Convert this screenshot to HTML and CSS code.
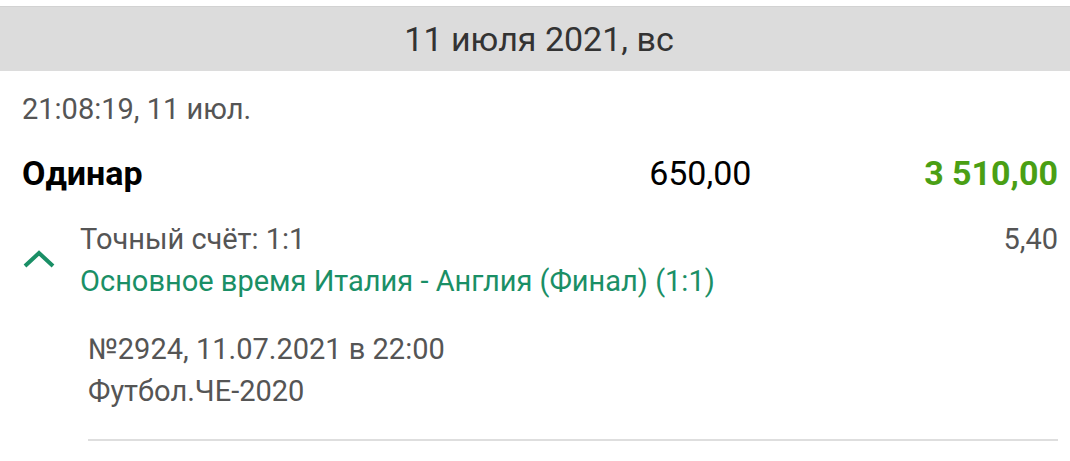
FILE: index.html
```html
<!DOCTYPE html>
<html lang="ru">
<head>
<meta charset="utf-8">
<link rel="stylesheet" href="styles.css">
</head>
<body>
<div class="day-head">11 июля 2021, вс</div>
<div class="bet">
  <div class="bet-time">21:08:19, 11 июл.</div>
  <div class="bet-row">
    <div class="bet-type">Одинар</div>
    <div class="bet-stake">650,00</div>
    <div class="bet-win">3 510,00</div>
  </div>
  <div class="outcome">
    <div class="chev">
      <svg width="34" height="20" viewBox="0 0 34 20"><path d="M3 16 L17 3 L31 16" fill="none" stroke="#1a8f66" stroke-width="4"/></svg>
    </div>
    <div class="outcome-body">
      <div class="outcome-top">
        <div class="outcome-name">Точный счёт: 1:1</div>
        <div class="outcome-coef">5,40</div>
      </div>
      <div class="outcome-event">Основное время Италия - Англия (Финал) (1:1)</div>
    </div>
  </div>
  <div class="details">
    <div class="detail-line">№2924, 11.07.2021 в 22:00</div>
    <div class="detail-line">Футбол.ЧЕ-2020</div>
  </div>
  <div class="divider"></div>
</div>
</body>
</html>
```

FILE: styles.css
```css
html, body {
  margin: 0;
  padding: 0;
  background: #fff;
  font-family: Roboto, "Noto Sans", sans-serif;
}
body {
  padding-top: 6px;
}
.day-head {
  height: 64px;
  background: #dcdcdc;
  border-top: 1px solid #d2d2d2;
  display: flex;
  align-items: center;
  justify-content: center;
  padding-left: 8px;
  font-size: 34px;
  color: #333;
}
.bet {
  padding: 0 12px 0 22px;
}
.bet-time {
  margin-top: 18px;
  font-size: 29px;
  line-height: 40px;
  color: #555;
}
.bet-row {
  display: flex;
  align-items: center;
  margin-top: 22px;
  height: 44px;
}
.bet-type {
  font-weight: 700;
  font-size: 34px;
  color: #000;
  flex: 1;
}
.bet-stake {
  font-size: 34px;
  color: #000;
  width: 100px;
  margin-right: 175px;
}
.bet-win {
  font-weight: 700;
  font-size: 34px;
  color: #4a9f14;
}
.outcome {
  display: flex;
  margin-top: 23px;
}
.chev {
  width: 58px;
  display: flex;
  align-items: center;
}
.outcome-body {
  flex: 1;
}
.outcome-top {
  display: flex;
  justify-content: space-between;
  font-size: 29px;
  line-height: 42px;
  color: #555;
}
.outcome-event {
  font-size: 29px;
  line-height: 42px;
  color: #1a8f66;
}
.details {
  padding-left: 66px;
  margin-top: 26px;
}
.detail-line {
  font-size: 29px;
  line-height: 42px;
  color: #555;
}
.divider {
  margin: 27px 0 0 66px;
  height: 2px;
  background: #dedede;
}
```
